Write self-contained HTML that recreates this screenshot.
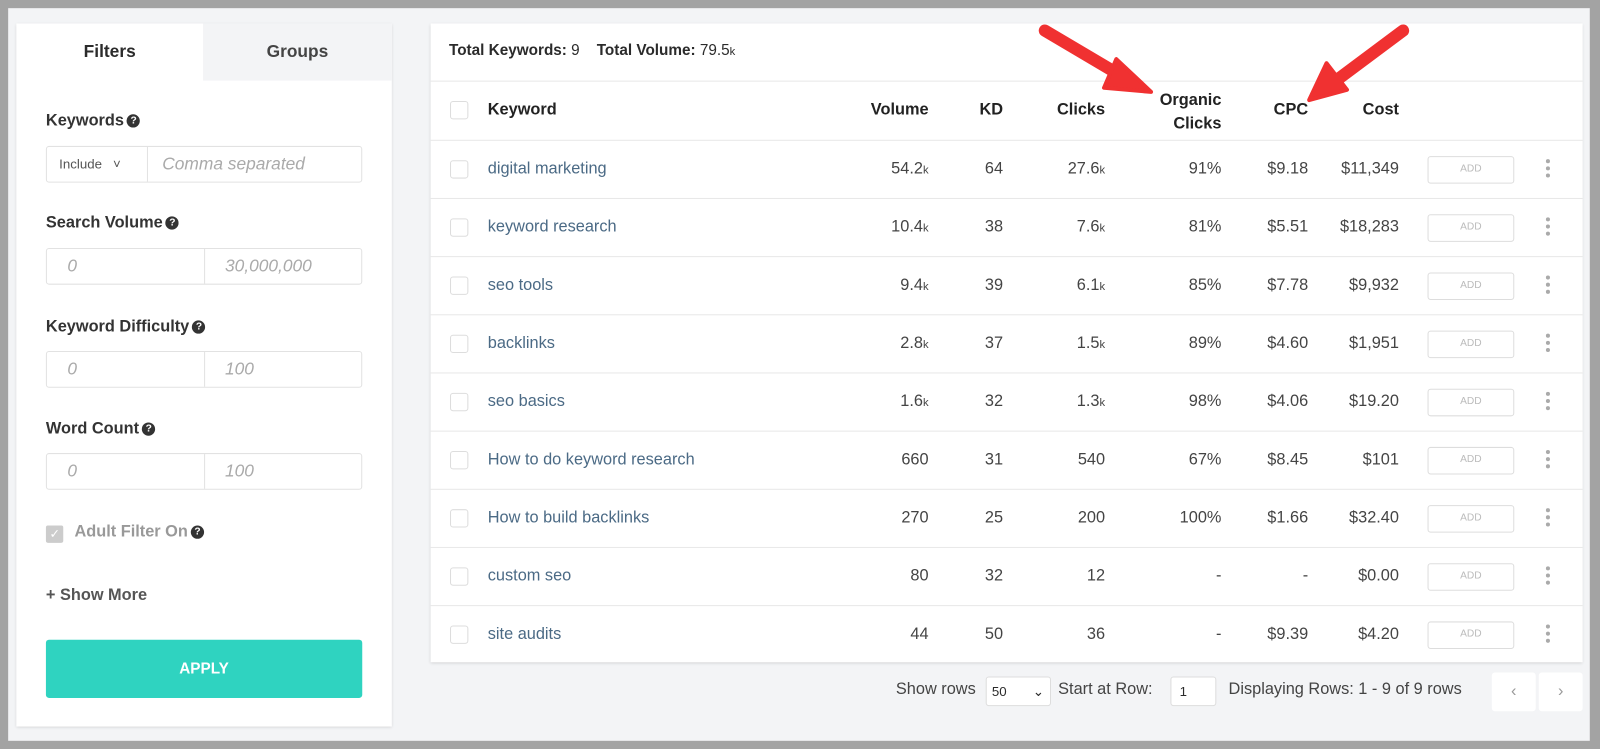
<!DOCTYPE html>
<html><head><style>
*{box-sizing:border-box;margin:0;padding:0}
body{width:1600px;height:749px;background:#a3a3a3;font-family:"Liberation Sans",sans-serif;position:relative;overflow:hidden;color:#2b2b2b}
#w{position:absolute;left:0;top:0;width:1568px;height:734px;transform:scale(1.0204);transform-origin:0 0}
.bg{position:absolute;left:8px;top:8px;width:1550px;height:718px;background:#f3f4f6}
.abs{position:absolute}
.lp{left:16px;top:23px;width:368px;height:689px;background:#fff;box-shadow:0 1px 3px rgba(0,0,0,.15)}
.tab{top:0;height:56px;line-height:56px;text-align:center;font-weight:bold;font-size:17px}
.lbl{left:29px;font-weight:bold;font-size:16px;color:#333}
.q{display:inline-block;width:13px;height:13px;border-radius:50%;background:#333;color:#fff;font-size:10px;line-height:13px;text-align:center;vertical-align:2px;margin-left:3px}
.inp{left:29px;width:310px;height:36px;border:1px solid #e2e2e2;border-radius:3px;display:flex}
.inp div{flex:1;font-style:italic;color:#aaa;font-size:17px;line-height:34px;padding-left:20px}
.inp div+div{border-left:1px solid #e2e2e2}
.rc{left:422px;top:23px;width:1129px;height:626px;background:#fff;box-shadow:0 1px 3px rgba(0,0,0,.15)}
.hl{left:0;width:1129px;height:1px;background:#e8e8e8}
.cb{left:19px;width:18px;height:18px;border:1px solid #ddd;border-radius:3px}
.c{font-size:16px;color:#444;text-align:right}
.kw{left:56px;font-size:16px;color:#4b6a85}
.h{font-weight:bold;font-size:16px;color:#222;text-align:right}
.add{left:977px;width:85px;height:27px;border:1.5px solid #ddd;border-radius:3px;font-size:10px;color:#bbb;text-align:center;line-height:24px}
.dots{left:1093px;width:4px}
.dots i{display:block;width:4px;height:4px;border-radius:50%;background:#aaa;margin-bottom:3px}
small{font-size:11px}
</style></head><body>
<div id="w">
<div class="bg"></div>
<div class="abs lp">
 <div class="abs tab" style="left:0;width:183px">Filters</div>
 <div class="abs tab" style="left:183px;width:185px;background:#f3f4f6;color:#444">Groups</div>
 <div class="abs lbl" style="top:87px">Keywords<span class="q">?</span></div>
 <div class="abs inp" style="top:120px"><div style="flex:0 0 98px;font-style:normal;color:#555;font-size:13px;padding-left:12px">Include &nbsp;&nbsp;˅</div><div style="padding-left:14px">Comma separated</div></div>
 <div class="abs lbl" style="top:187px">Search Volume<span class="q">?</span></div>
 <div class="abs inp" style="top:220px"><div>0</div><div>30,000,000</div></div>
 <div class="abs lbl" style="top:289px">Keyword Difficulty<span class="q">?</span></div>
 <div class="abs inp" style="top:321px"><div>0</div><div>100</div></div>
 <div class="abs lbl" style="top:389px">Word Count<span class="q">?</span></div>
 <div class="abs inp" style="top:421px"><div>0</div><div>100</div></div>
 <div class="abs" style="left:29px;top:492px;width:17px;height:17px;background:#ccc;border-radius:2px;color:#fff;font-size:12px;text-align:center;line-height:17px">✓</div>
 <div class="abs lbl" style="left:57px;top:490px;color:#999">Adult Filter On<span class="q">?</span></div>
 <div class="abs lbl" style="top:552px;color:#555">+ Show More</div>
 <div class="abs" style="left:29px;top:604px;width:310px;height:57px;background:#2fd3c0;border-radius:3px;color:#fff;font-weight:bold;font-size:15px;text-align:center;line-height:57px">APPLY</div>
</div>
<div class="abs rc">
 <div class="abs" style="left:18px;top:18px;font-size:15px"><b>Total Keywords:</b> 9 &nbsp;&nbsp; <b>Total Volume:</b> 79.5<small>k</small></div>
 <div class="abs hl" style="top:56px"></div>
 <div class="abs cb" style="top:76px"></div>
 <div class="abs h" style="left:56px;top:76px;text-align:left">Keyword</div>
 <div class="abs h" style="right:641px;top:76px">Volume</div>
 <div class="abs h" style="right:568px;top:76px">KD</div>
 <div class="abs h" style="right:468px;top:76px">Clicks</div>
 <div class="abs h" style="right:354px;top:64px;line-height:23px">Organic<br>Clicks</div>
 <div class="abs h" style="right:269px;top:76px">CPC</div>
 <div class="abs h" style="right:180px;top:76px">Cost</div>
 <div class="abs hl" style="top:114px"></div>
 <div id="rows"></div>
</div>
<svg class="abs" style="left:0;top:0" width="1568" height="734">
 <g fill="#f03131" stroke="#f03131" stroke-linecap="round">
 <line x1="1024" y1="30" x2="1100" y2="75" stroke-width="12"/>
 <polygon points="1128,90 1094,58 1082,86" stroke-width="4" stroke-linejoin="round"/>
 <line x1="1375" y1="30" x2="1308" y2="80" stroke-width="12"/>
 <polygon points="1283,98 1300,62 1320,88" stroke-width="4" stroke-linejoin="round"/>
 </g>
</svg>
<div class="abs" style="left:878px;top:667px;font-size:16px;color:#444">Show rows</div>
<div class="abs" style="left:966px;top:663px;width:64px;height:29px;border:1px solid #ddd;background:#fff;font-size:13px;line-height:27px;padding-left:5px;border-radius:3px">50 <span style="position:absolute;right:6px">⌄</span></div>
<div class="abs" style="left:1037px;top:667px;font-size:16px;color:#444">Start at Row:</div>
<div class="abs" style="left:1147px;top:663px;width:45px;height:29px;border:1px solid #ddd;background:#fff;font-size:13px;line-height:27px;padding-left:8px;border-radius:3px">1</div>
<div class="abs" style="left:1204px;top:667px;font-size:16px;color:#444">Displaying Rows: 1 - 9 of 9 rows</div>
<div class="abs" style="left:1462px;top:659px;width:43px;height:38px;background:#fff;border-radius:3px;text-align:center;line-height:38px;color:#999">‹</div>
<div class="abs" style="left:1508px;top:659px;width:43px;height:38px;background:#fff;border-radius:3px;text-align:center;line-height:38px;color:#999">›</div>
</div>
<script>
var d=[["digital marketing","54.2<small>k</small>","64","27.6<small>k</small>","91%","$9.18","$11,349"],
["keyword research","10.4<small>k</small>","38","7.6<small>k</small>","81%","$5.51","$18,283"],
["seo tools","9.4<small>k</small>","39","6.1<small>k</small>","85%","$7.78","$9,932"],
["backlinks","2.8<small>k</small>","37","1.5<small>k</small>","89%","$4.60","$1,951"],
["seo basics","1.6<small>k</small>","32","1.3<small>k</small>","98%","$4.06","$19.20"],
["How to do keyword research","660","31","540","67%","$8.45","$101"],
["How to build backlinks","270","25","200","100%","$1.66","$32.40"],
["custom seo","80","32","12","-","-","$0.00"],
["site audits","44","50","36","-","$9.39","$4.20"]];
var r=[641,568,468,354,269,180],h="";
d.forEach(function(x,i){var t=115+i*57,m=t+19;
h+='<div class="abs cb" style="top:'+(t+19)+'px"></div><div class="abs kw" style="top:'+m+'px">'+x[0]+'</div>';
for(var j=1;j<7;j++)h+='<div class="abs c" style="right:'+r[j-1]+'px;top:'+m+'px">'+x[j]+'</div>';
h+='<div class="abs add" style="top:'+(t+15)+'px">ADD</div><div class="abs dots" style="top:'+(t+18)+'px"><i></i><i></i><i></i></div>';
if(i<8)h+='<div class="abs hl" style="top:'+(t+56)+'px"></div>';});
document.getElementById('rows').innerHTML=h;
</script>
</body></html>
